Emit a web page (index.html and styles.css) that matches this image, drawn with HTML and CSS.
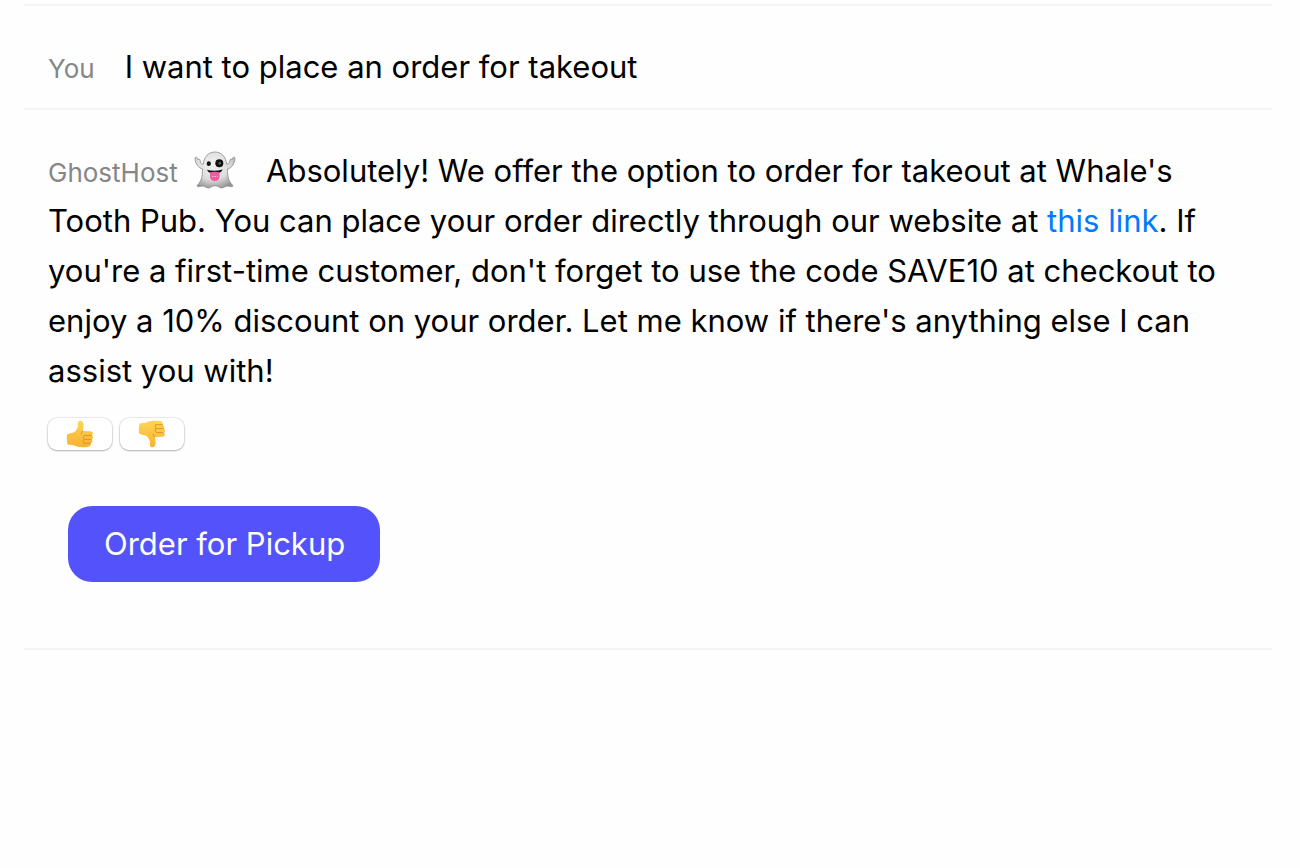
FILE: index.html
```html
<!DOCTYPE html>
<html lang="en">
<head>
<meta charset="utf-8">
<meta name="viewport" content="width=device-width, initial-scale=1">
<title>GhostHost</title>
<link rel="stylesheet" href="styles.css">
</head>
<body>
<main class="chat">
  <article class="message">
    <p class="text"><span class="sender">You</span>I want to place an order for takeout</p>
  </article>
  <article class="message">
    <p class="text"><span class="sender">GhostHost
      <svg class="ghost" viewBox="0 0 42 38" role="img" aria-label="Ghost">
        <defs>
          <radialGradient id="body" cx="45%" cy="35%" r="70%">
            <stop offset="0" stop-color="#f4f4f4"/><stop offset=".6" stop-color="#dcdcdc"/><stop offset="1" stop-color="#929292"/>
          </radialGradient>
        </defs>
        <path fill="url(#body)" stroke="#8c8c8c" stroke-width=".8" stroke-linejoin="round" d="M8.5 18C4.500 17 1.500 13 1 7.800C.900 5.900 2.600 5.600 3.300 7L4.200 9C4.600 7.500 6.300 8 6.200 9.700C6.200 12 7.300 13.500 9.300 13.200C10 5.800 14.500 1 21 1S32 5.800 32.700 13.200C34.700 13.500 35.800 12 35.800 9.700C35.700 8 37.400 7.500 37.800 9L38.700 7C39.400 5.600 41.100 5.900 41 7.800C40.500 13 37.500 17 33.500 18C33.500 25 34.300 30 38.500 34C39.400 35 38.600 36 37 35.600C34.200 35 32.400 34.700 30.500 36C28.300 37.400 26.300 37.200 24.500 35.800C22.200 34.300 19.800 34.300 17.500 35.800C15.700 37.200 13.700 37.400 11.500 36C9.600 34.700 7.800 35 5 35.600C3.400 36 2.600 35 3.500 34C7.700 30 8.500 25 8.500 18Z"/>
        <ellipse cx="14.800" cy="12.700" rx="2.100" ry="2.400" fill="#111"/>
        <circle cx="25.300" cy="12.300" r="4" fill="#111"/>
        <circle cx="25.800" cy="12.300" r="1.200" fill="#666"/>
        <path fill="#111" d="M13 18.800Q20.500 21 28.500 18.500Q27.500 22.500 20.700 22.700Q14.500 22.700 13 18.800Z"/>
        <path fill="#ee5d9f" d="M16 21.200Q20.800 20.300 25.600 21.200V25.500Q25.300 30 20.800 30T16 25.500Z"/>
        <path stroke="#fbb8d6" stroke-width="1" stroke-dasharray="1.500 1" d="M18 25.500H24"/>
      </svg></span>Absolutely! We offer the option to order for takeout at Whale's Tooth Pub. You can place your order directly through our website at <a class="link" href="#order">this link</a>. If you're a first-time customer, don't forget to use the code SAVE10 at checkout to enjoy a 10% discount on your order. Let me know if there's anything else I can assist you with!</p>
    <div class="feedback">
      <button class="vote" type="button" aria-label="Thumbs up">
        <svg class="thumb" viewBox="0 0 28 28" aria-hidden="true">
          <defs>
            <linearGradient id="skin" x2="0" y2="1"><stop offset="0" stop-color="#ffd552"/><stop offset="1" stop-color="#f8b234"/></linearGradient>
          </defs>
          <path fill="url(#skin)" d="M1 14.500C4 12.500 7 13.500 9 11.500C11.500 9 12 7 12 4C11.800 1.500 12.500.700 14 .700C16.500.700 18 3 17.600 6.500L16.900 11L24.500 11.200C27.300 11.500 27.500 14.500 25.700 15.300C27.600 16 27.500 18.800 25.500 19.400C27 20.300 26.500 22.800 24.600 23.100C25.500 25 24 26.800 21.500 26.900C16 27.500 11 27 7.500 25.300L1.500 24.500Q.300 19 1 14.500Z"/>
          <path fill="none" stroke="#e09520" stroke-width="1" stroke-linecap="round" d="M16.500 11.200L15.200 14M18.500 15.400H25.300M18 19.400H25.200M18 23.200H24.300M18.300 15.400Q16 17.200 18 19.400Q16 21.200 18 23.200"/>
        </svg>
      </button>
      <button class="vote" type="button" aria-label="Thumbs down">
        <svg class="thumb" viewBox="0 0 28 28" aria-hidden="true">
          <path fill="url(#skin)" d="M1 13.500C4 15.500 7 14.500 9 16.500C11.500 19 12 21 12 24C11.800 26.500 12.500 27.300 14 27.300C16.500 27.300 18 25 17.600 21.500L16.900 17L24.500 16.800C27.300 16.500 27.500 13.500 25.700 12.700C27.600 12 27.500 9.200 25.500 8.600C27 7.700 26.500 5.200 24.600 4.900C25.500 3 24 1.200 21.500 1.100C16 .500 11 1 7.500 2.700L1.500 3.500Q.300 9 1 13.500Z"/>
          <path fill="none" stroke="#e09520" stroke-width="1" stroke-linecap="round" d="M16.500 16.800L15.200 14M18.500 12.600H25.300M18 8.600H25.200M18 4.800H24.300M18.300 12.600Q16 10.800 18 8.600Q16 6.800 18 4.800"/>
        </svg>
      </button>
    </div>
    <button class="order" type="button">Order for Pickup</button>
  </article>
</main>
</body>
</html>
```
FILE: styles.css
```css
* { box-sizing: border-box; }

body {
  margin: 0;
  background: #fefefe;
  color: #000;
  font-family: Inter, "Liberation Sans", sans-serif;
}

.chat {
  margin: 4px 28px 0 24px;
  border-top: 2px solid #f4f4f4;
}

.message {
  padding: 36px 24px 16px;
  border-bottom: 2px solid #f4f4f4;
}

.message:last-child { padding-bottom: 66px; }

.text {
  margin: 0;
  font-size: 31px;
  line-height: 50px;
}

.sender {
  margin-right: 30px;
  color: #868686;
  font-size: 26px;
  line-height: 32px;
}

.ghost {
  width: 42px;
  height: 38px;
  margin-left: 9px;
  vertical-align: -7px;
}

.link {
  color: #007aff;
  text-decoration: none;
}

.feedback {
  display: flex;
  gap: 8px;
  margin-top: 22px;
}

.vote {
  display: flex;
  align-items: center;
  justify-content: center;
  width: 64px;
  height: 32px;
  padding: 0;
  border: 0;
  border-radius: 9px;
  background: #fff;
  box-shadow: 0 0 1px 1px rgba(0, 0, 0, 0.08), 0 1px 2px rgba(0, 0, 0, 0.25);
}

.thumb {
  width: 28px;
  height: 28px;
}

.order {
  display: block;
  margin: 56px 20px 0;
  padding: 13px 35px 13px 36px;
  border: 0;
  border-radius: 24px;
  background: #5452fa;
  color: #fff;
  font-family: inherit;
  font-size: 31px;
  line-height: 50px;
}
```
